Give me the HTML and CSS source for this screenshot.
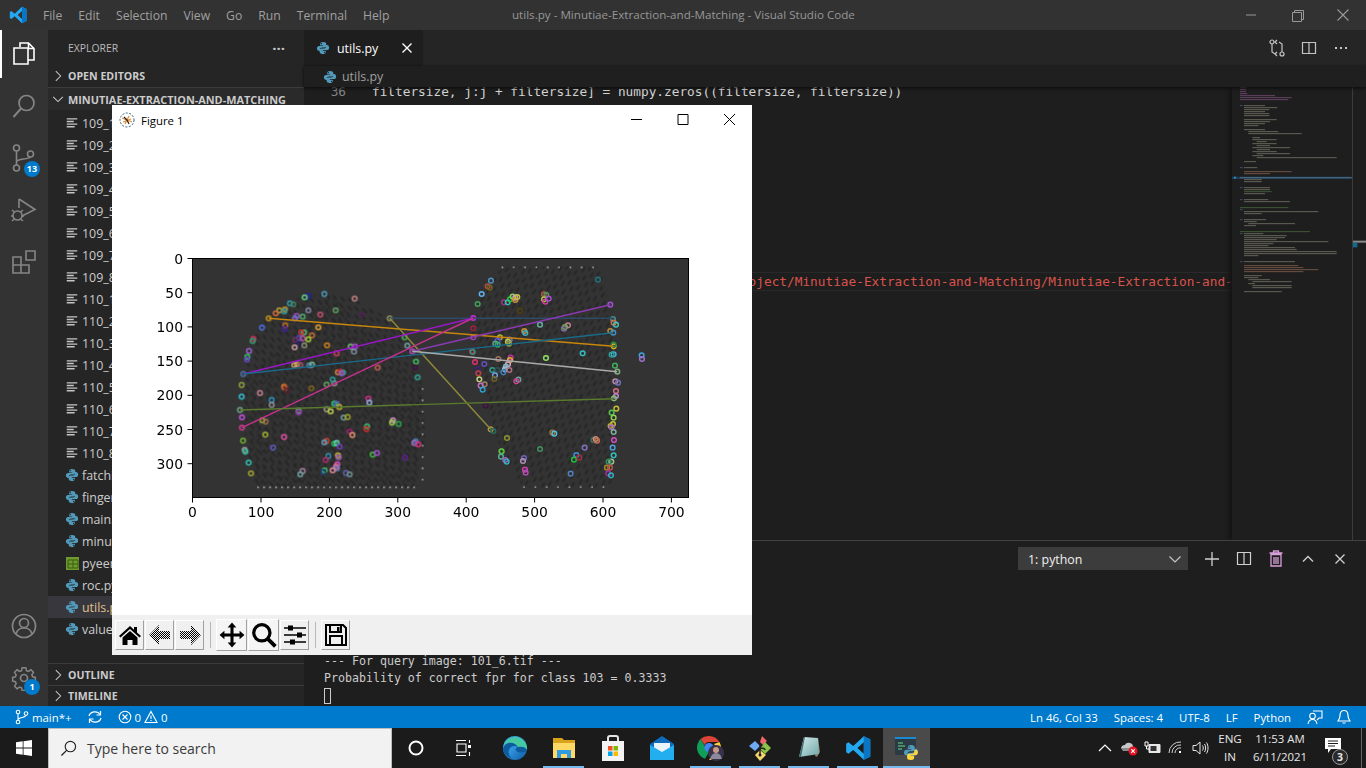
FILE: index.html
```html
<!DOCTYPE html>
<html lang="en">
<head>
<meta charset="utf-8">
<title>utils.py - Minutiae-Extraction-and-Matching - Visual Studio Code</title>
<link rel="stylesheet" href="styles.css">
</head>
<body>
<svg class="defs" width="0" height="0" aria-hidden="true">
  <defs>
    <symbol id="py" viewBox="0 0 16 16">
      <path fill="#519aba" d="M7.9 1C5.2 1 4.8 2.2 4.8 3.3V5h3.4v.7H3.4C2 5.7 1 6.8 1 8.4s.9 2.9 2.3 2.9h1.2V9.6c0-1.3 1.1-2.3 2.4-2.3h3c1.1 0 1.9-.9 1.9-2V3.3C11.800 2 10.600 1 7.900 1zM6.200 2.300a.7.7 0 1 1 0 1.400.7.7 0 0 1 0-1.400z"/>
      <path fill="#519aba" d="M8.100 15c2.700 0 3.100-1.200 3.100-2.300V11H7.800v-.7h4.800c1.400 0 2.400-1.100 2.400-2.700s-.9-2.900-2.300-2.900h-1.200v1.700c0 1.300-1.100 2.300-2.400 2.300h-3c-1.100 0-1.900.9-1.900 2v2c0 1.300 1.200 2.300 3.900 2.300zm1.700-1.300a.7.7 0 1 1 0-1.400.7.7 0 0 1 0 1.400z"/>
    </symbol>
    <symbol id="lines" viewBox="0 0 16 16">
      <path fill="#c5c5c5" d="M2 2.500h12v1.500H2zM2 5.500h8v1.500H2zM2 8.500h12v1.500H2zM2 11.500h9v1.500H2z"/>
    </symbol>
    <symbol id="chev-r" viewBox="0 0 16 16"><path fill="none" stroke="#c5c5c5" stroke-width="1.200" d="M5.500 2.500 11 8l-5.500 5.500"/></symbol>
    <symbol id="chev-d" viewBox="0 0 16 16"><path fill="none" stroke="#c5c5c5" stroke-width="1.200" d="M2.500 5.500 8 11l5.500-5.500"/></symbol>
    <pattern id="checker" width="2" height="2" patternUnits="userSpaceOnUse"><rect width="1" height="1" fill="#000"/><rect x="1" y="1" width="1" height="1" fill="#000"/></pattern>
    <pattern id="ridgeA" width="34" height="30" patternUnits="userSpaceOnUse" patternTransform="rotate(52)"><path d="M0 6h17M14 21h16" stroke="#232323" stroke-width="5"/></pattern>
    <pattern id="ridgeB" width="34" height="30" patternUnits="userSpaceOnUse" patternTransform="rotate(-58)"><path d="M0 6h17M14 21h16" stroke="#242424" stroke-width="5"/></pattern>
    <clipPath id="printL"><path d="M232 712 205 640 190 500 190 380 215 270 270 190 350 145 440 130 530 150 640 215 700 300 730 420 735 560 712 712z"/></clipPath>
    <clipPath id="printR"><path d="M250 712 185 610 125 410 95 250 125 130 165 70 200 50 470 50 495 90 525 260 530 500 515 712z"/></clipPath>
    <linearGradient id="edgeG" x1="0" y1="0" x2="1" y2="1"><stop offset="0" stop-color="#35c1f1"/><stop offset=".5" stop-color="#2f8fd8"/><stop offset="1" stop-color="#0c59a4"/></linearGradient>
    <linearGradient id="noteG" x1="0" y1="0" x2="1" y2="1"><stop offset="0" stop-color="#d6ecec"/><stop offset="1" stop-color="#6fa7a9"/></linearGradient>
  </defs>
</svg>

<header class="titlebar">
  <svg class="vscode-logo" width="18" height="18" viewBox="0 0 18 18"><path fill="#23a9f1" d="M13 .8 17.500 3v12L13 17.200 5.700 10.300 2.400 12.900.8 12V6l1.600-.9 3.300 2.600zM13 5 8.600 9l4.400 4z"/><path fill="#0a75c2" d="M13 .8 17.500 3v12L13 17.200V13 5z"/></svg>
  <nav class="menu"><span>File</span><span>Edit</span><span>Selection</span><span>View</span><span>Go</span><span>Run</span><span>Terminal</span><span>Help</span></nav>
  <div class="window-title">utils.py - Minutiae-Extraction-and-Matching - Visual Studio Code</div>
  <div class="win-controls">
    <svg width="46" height="30" viewBox="0 0 46 30"><path d="M18 15h10" stroke="#999" fill="none"/></svg>
    <svg width="46" height="30" viewBox="0 0 46 30"><path d="M18.500 12.500h9v9h-9zM20.500 12.500v-2h9v9h-2" stroke="#999" fill="none"/></svg>
    <svg width="46" height="30" viewBox="0 0 46 30"><path d="M17.500 9.500l11 11M28.500 9.500l-11 11" stroke="#999" stroke-width="1.100" fill="none"/></svg>
  </div>
</header>

<div class="workbench">
  <aside class="activity">
    <div class="act-item act-active">
      <svg width="26" height="26" viewBox="0 0 26 26"><path fill="none" stroke="#fff" stroke-width="1.600" d="M9 6V2h8.500L23 7.500V19h-6M17.500 2v5.500H23M3 7h14v16H3z"/></svg>
    </div>
    <div class="act-item"><svg width="26" height="26" viewBox="0 0 26 26"><circle cx="15.500" cy="10" r="7.500" fill="none" stroke="#858585" stroke-width="1.700"/><path d="M10 15.500 2.500 24" stroke="#858585" stroke-width="1.900"/></svg></div>
    <div class="act-item act-badged">
      <svg width="26" height="28" viewBox="0 0 26 28"><g fill="none" stroke="#858585" stroke-width="1.600"><circle cx="5.500" cy="4" r="3"/><circle cx="19.500" cy="10" r="3"/><circle cx="5.500" cy="24" r="3"/><path d="M5.500 7v14M5.500 18c1-4 11-2 14-5"/></g></svg>
      <span class="badge badge-scm">13</span>
    </div>
    <div class="act-item"><svg width="28" height="28" viewBox="0 0 28 28"><g fill="none" stroke="#858585" stroke-width="1.600"><path d="M9 3l16 10.500L12 20"/><path d="M9 3v9"/><circle cx="7.500" cy="19.500" r="4.500"/><path d="M2 14l3 2.500M13 14l-3 2.500M1 20h2M12 20h2M2 25l3-2.500M13 25l-3-2.500"/></g></svg></div>
    <div class="act-item"><svg width="26" height="26" viewBox="0 0 26 26"><g fill="none" stroke="#858585" stroke-width="1.600"><path d="M2 8h8v8H2zM2 16h8v8H2zM10 16h8v8h-8z"/><path d="M15 2h9v9h-9z"/></g></svg></div>
    <div class="act-bottom">
      <div class="act-item"><svg width="26" height="26" viewBox="0 0 26 26"><g fill="none" stroke="#858585" stroke-width="1.700"><circle cx="13" cy="13" r="11.500"/><circle cx="13" cy="10" r="4.500"/><path d="M5 21c1-4 4-6 8-6s7 2 8 6"/></g></svg></div>
      <div class="act-item act-badged">
        <svg width="26" height="26" viewBox="0 0 26 26"><g fill="none" stroke="#858585" stroke-width="1.700"><circle cx="13" cy="13" r="3.500"/><path d="M11 1.500h4l.7 3.300 2.200.9 2.800-1.800 2.800 2.800-1.800 2.800.9 2.200 3 .7v4l-3 .7-.9 2.200 1.800 2.800-2.800 2.800-2.800-1.800-2.200.9-.7 3h-4l-.7-3-2.200-.9-2.800 1.800-2.800-2.800 1.800-2.800-.9-2.200-3-.7v-4l3-.7.9-2.200L2.500 6.700l2.800-2.800 2.800 1.800 2.200-.9z" transform="translate(1.300 1.300) scale(.9)"/></g></svg>
        <span class="badge badge-gear">1</span>
      </div>
    </div>
  </aside>

  <aside class="sidebar">
    <div class="side-title"><span>EXPLORER</span><span class="dots">···</span></div>
    <div class="sec-row"><svg class="chev"><use href="#chev-r"/></svg>OPEN EDITORS</div>
    <div class="sec-row sec-root"><svg class="chev"><use href="#chev-d"/></svg>MINUTIAE-EXTRACTION-AND-MATCHING</div>
    <ul class="files">
      <li><svg class="ficon"><use href="#lines"/></svg>109_1.tif</li>
      <li><svg class="ficon"><use href="#lines"/></svg>109_2.tif</li>
      <li><svg class="ficon"><use href="#lines"/></svg>109_3.tif</li>
      <li><svg class="ficon"><use href="#lines"/></svg>109_4.tif</li>
      <li><svg class="ficon"><use href="#lines"/></svg>109_5.tif</li>
      <li><svg class="ficon"><use href="#lines"/></svg>109_6.tif</li>
      <li><svg class="ficon"><use href="#lines"/></svg>109_7.tif</li>
      <li><svg class="ficon"><use href="#lines"/></svg>109_8.tif</li>
      <li><svg class="ficon"><use href="#lines"/></svg>110_1.tif</li>
      <li><svg class="ficon"><use href="#lines"/></svg>110_2.tif</li>
      <li><svg class="ficon"><use href="#lines"/></svg>110_3.tif</li>
      <li><svg class="ficon"><use href="#lines"/></svg>110_4.tif</li>
      <li><svg class="ficon"><use href="#lines"/></svg>110_5.tif</li>
      <li><svg class="ficon"><use href="#lines"/></svg>110_6.tif</li>
      <li><svg class="ficon"><use href="#lines"/></svg>110_7.tif</li>
      <li><svg class="ficon"><use href="#lines"/></svg>110_8.tif</li>
      <li><svg class="ficon"><use href="#py"/></svg>fatching.py</li>
      <li><svg class="ficon"><use href="#py"/></svg>fingerprint.py</li>
      <li><svg class="ficon"><use href="#py"/></svg>main.py</li>
      <li><svg class="ficon"><use href="#py"/></svg>minutiae.py</li>
      <li><svg class="ficon"><rect x="1" y="1" width="14" height="14" fill="#6f9a2e"/><path d="M3 4h10v8H3zM8 4v8M3 8h10" stroke="#3d5c10" fill="none"/></svg>pyeer.csv</li>
      <li><svg class="ficon"><use href="#py"/></svg>roc.py</li>
      <li class="file-sel"><svg class="ficon"><use href="#py"/></svg>utils.py</li>
      <li><svg class="ficon"><use href="#py"/></svg>values.py</li>
    </ul>
    <div class="sec-row sec-foot"><svg class="chev"><use href="#chev-r"/></svg>OUTLINE</div>
    <div class="sec-row sec-foot"><svg class="chev"><use href="#chev-r"/></svg>TIMELINE</div>
  </aside>

  <main class="editor-area">
    <div class="tabs">
      <div class="tab"><svg class="ficon"><use href="#py"/></svg><span>utils.py</span>
        <svg class="tab-x" width="16" height="16" viewBox="0 0 16 16"><path d="M3.500 3.500l9 9M12.500 3.500l-9 9" stroke="#fff" stroke-width="1.400"/></svg></div>
      <div class="tab-actions">
        <svg width="16" height="18" viewBox="0 0 16 18"><g fill="none" stroke="#c5c5c5" stroke-width="1.200"><circle cx="3" cy="3" r="2"/><circle cx="13" cy="15" r="2"/><path d="M3 5v8l3 2M13 13V5L10 3M8 1 6 3l2 2M8 13l-2 2 2 2"/></g></svg>
        <svg width="16" height="16" viewBox="0 0 16 16"><path d="M1.500 2.500h13v11h-13zM8 2.500v11" fill="none" stroke="#c5c5c5" stroke-width="1.200"/></svg>
        <svg width="16" height="16" viewBox="0 0 16 16"><path d="M2 8h2M7 8h2M12 8h2" stroke="#c5c5c5" stroke-width="2"/></svg>
      </div>
    </div>
    <div class="breadcrumb"><svg class="ficon"><use href="#py"/></svg><span>utils.py</span></div>
    <div class="editor-body">
      <div class="code">
        <div class="line"><span class="ln">36</span><span class="src">filtersize, j:j + filtersize] = numpy.zeros((filtersize, filtersize))</span></div>
        <div class="line"></div><div class="line"></div><div class="line"></div>
        <div class="line"></div><div class="line"></div><div class="line"></div>
        <div class="line"></div><div class="line"></div><div class="line"></div>
        <div class="line line-cur"><span class="ln">46</span><span class="src str">db_path = "C:/Users/user/Documents/Fingerprint_Project/Minutiae-Extraction-and-Matching/Minutiae-Extraction-and-Matching/data</span></div>
      </div>
      <svg class="minimap" width="134" height="453" viewBox="36 171 402 1359">
        <rect x="36" y="440" width="360" height="7" fill="#264f78" opacity=".65"/>
        <g class="mm-lines" fill="none" stroke-width="2.600">
          <path stroke="#b070b0" d="M60 173h20M60 179h18M60 185h18M60 191h22M60 197h105M60 203h155M60 209h145"/>
          <path stroke="#4a8fc8" d="M60 227h8M60 413h8M60 473h8M60 509h8M60 539h8M60 569h8M60 611h8M60 695h8"/>
          <path stroke="#b0b09a" d="M72 227h63M72 233h100M72 239h76M72 245h63M72 251h76M72 257h76M72 269h98M72 275h78M72 281h63M72 287h43M72 299h63M85 305h90M85 311h160M97 323h23M97 329h73M110 335h30M97 341h73M110 347h40M97 353h113M110 359h40M97 365h73M110 371h100M97 377h33M110 383h240M72 395h36M72 413h40M72 449h53M72 455h53M72 473h78M72 479h78M72 491h63M72 509h73M72 515h138M72 545h223M72 551h53M72 569h66M72 575h38M85 581h140M72 587h36M72 611h58M72 617h128M72 623h123M72 629h98M72 635h253M72 641h88M72 647h73M72 653h153M72 659h158M72 665h278M72 671h278M72 677h43M72 695h153M72 737h53M72 743h43M85 749h65M97 755h118M85 761h20M97 767h118M97 773h118M72 785h113"/>
          <path stroke="#c89070" d="M72 425h143M72 431h78M72 707h163M72 713h178M72 719h223M72 725h178"/>
          <path stroke="#6a9955" d="M72 485h83M60 533h145M60 605h210"/>
          <path stroke="#7aa4b0" d="M60 443h335"/>
        </g>
        <rect x="42" y="440" width="6" height="6" fill="#1c8fc0"/>
        <path d="M397.500 171v1359" stroke="#3c3c3c" stroke-width="3"/>
        <rect x="399" y="632" width="39" height="6" fill="#8a8a8a"/>
        <rect x="399" y="638" width="13" height="14" fill="#146a8c"/>
      </svg>
    </div>
    <section class="panel">
      <div class="panel-head">
        <div class="term-select"><span>1: python</span><svg width="16" height="16"><use href="#chev-d"/></svg></div>
        <div class="panel-actions">
          <svg width="32" height="22" viewBox="0 0 32 22"><path d="M16 4v14M9 11h14" stroke="#d0d0d0" stroke-width="1.300"/></svg>
          <svg width="32" height="22" viewBox="0 0 32 22"><path d="M9.500 4.500h13v12h-13zM16 4.500v12" fill="none" stroke="#d0d0d0" stroke-width="1.200"/></svg>
          <svg width="32" height="22" viewBox="0 0 32 22"><path d="M11 6.500h10v11.500H11zM9.500 5h13M13.500 5V3h5v2M14 9v7M16 9v7M18 9v7" fill="none" stroke="#d8a0d8" stroke-width="1.300"/></svg>
          <svg width="32" height="22" viewBox="0 0 32 22"><path d="M11 13.500l5-5 5 5" fill="none" stroke="#d0d0d0" stroke-width="1.300"/></svg>
          <svg width="32" height="22" viewBox="0 0 32 22"><path d="M11.500 6.500l9 9M20.500 6.500l-9 9" fill="none" stroke="#d0d0d0" stroke-width="1.300"/></svg>
        </div>
      </div>
      <div class="terminal">
        <div class="term-line">--- For query image: 101_6.tif ---</div>
        <div class="term-line">Probability of correct fpr for class 103 = 0.3333</div>
        <div class="term-line"><span class="cursor"></span></div>
      </div>
    </section>
  </main>
</div>

<footer class="statusbar">
  <div class="st-left">
    <span class="st-item st-branch"><svg width="14" height="16" viewBox="0 0 14 16"><g fill="none" stroke="#fff" stroke-width="1.100"><circle cx="3" cy="3" r="1.800"/><circle cx="3" cy="13" r="1.800"/><circle cx="11" cy="4.500" r="1.800"/><path d="M3 4.800v6.400M3 11c0-3 8-2 8-4.700"/></g></svg>main*+</span>
    <span class="st-item st-sync"><svg width="16" height="16" viewBox="0 0 16 16"><g fill="none" stroke="#fff" stroke-width="1.200"><path d="M2 7a6 5.500 0 0 1 11-1.500M14 9a6 5.500 0 0 1-11 1.500"/><path d="M13.500 2v4h-4M2.500 14v-4h4"/></g></svg></span>
    <span class="st-item st-problems"><svg width="14" height="14" viewBox="0 0 14 14"><circle cx="7" cy="7" r="5.800" fill="none" stroke="#fff" stroke-width="1.100"/><path d="M4.500 4.500l5 5M9.500 4.500l-5 5" stroke="#fff" stroke-width="1.100"/></svg>0<svg width="14" height="14" viewBox="0 0 14 14"><path d="M7 1.500 13 12.500H1zM7 5.500v3.500M7 10v1" fill="none" stroke="#fff" stroke-width="1.100"/></svg>0</span>
  </div>
  <div class="st-right">
    <span>Ln 46, Col 33</span><span>Spaces: 4</span><span>UTF-8</span><span>LF</span><span>Python</span>
    <svg class="st-feedback" width="16" height="16" viewBox="0 0 16 16"><g fill="none" stroke="#fff" stroke-width="1.100"><circle cx="5.500" cy="7" r="2.800"/><path d="M1 15c.5-3 2-4.500 4.500-4.500S9.500 12 10 15M6 2h9v7h-3l-2 2"/></g></svg>
    <svg class="st-bell" width="16" height="16" viewBox="0 0 16 16"><path d="M8 1.500c-3 0-4 2-4 5 0 3-1.500 4.500-2 5.500h12c-.5-1-2-2.500-2-5.500 0-3-1-5-4-5zM6.500 14h3" fill="none" stroke="#fff" stroke-width="1.200"/></svg>
  </div>
</footer>

<footer class="taskbar">
  <div class="tb-start"><svg width="16" height="16" viewBox="0 0 16 16"><path fill="#fff" d="M0 2.200 6.700 1.300v6.200H0zM7.500 1.200 16 0v7.500H7.500zM0 8.400h6.700v6.300L0 13.800zM7.500 8.400H16V16l-8.500-1.200z"/></svg></div>
  <div class="tb-search">
    <svg width="17" height="17" viewBox="0 0 18 18"><circle cx="11" cy="7" r="5.500" fill="none" stroke="#222" stroke-width="1.200"/><path d="M7 11 1.500 16.500" stroke="#222" stroke-width="1.400"/></svg>
    <span>Type here to search</span>
  </div>
  <div class="tb-cell tb-wide"><svg width="16" height="16" viewBox="0 0 16 16"><circle cx="8" cy="8" r="6.500" fill="none" stroke="#fff" stroke-width="2"/></svg></div>
  <div class="tb-cell tb-wide"><svg width="18" height="16" viewBox="0 0 18 16"><path d="M1 .5h10M1 15.500h10M2 4h9v8H2zM14.500 0v3M14.500 12v4" fill="none" stroke="#fff" stroke-width="1.100"/><rect x="13" y="5" width="3" height="3" fill="#fff"/></svg></div>
  <div class="tb-cell"><svg width="26" height="26" viewBox="0 0 26 26"><circle cx="13" cy="13" r="12" fill="url(#edgeG)"/><path d="M1 14C2 8 8 4 14 5c6 1 10 5 11 10-2 3-6 3-9 2-3-1-3-4 0-5-3-2-8-1-9 3-1 3 0 7 4 9C6 23 1 19 1 14z" fill="#0e5a9e"/><path d="M16 12c4-1 8 0 9 3 1-6-4-13-12-13C8 2 3 6 2 11c3-4 10-5 14 1z" fill="#46c9a0"/></svg></div>
  <div class="tb-cell tb-run"><svg width="24" height="22" viewBox="0 0 24 22"><path fill="#d9a21b" d="M1 1h9l2 2h11v18H1z"/><path fill="#ffd964" d="M1 6h22v15H1z"/><path fill="#2f9be0" d="M5 13h14v8h-4v-4H9v4H5z"/></svg></div>
  <div class="tb-cell"><svg width="24" height="26" viewBox="0 0 24 26"><path d="M7 7V3a2 2 0 0 1 2-2h6a2 2 0 0 1 2 2v4" fill="none" stroke="#e5e5e5" stroke-width="2"/><path fill="#f3f3f3" d="M1 6h22v20H1z"/><rect x="7" y="11" width="4.500" height="4.500" fill="#f25022"/><rect x="12.500" y="11" width="4.500" height="4.500" fill="#7fba00"/><rect x="7" y="16.500" width="4.500" height="4.500" fill="#00a4ef"/><rect x="12.500" y="16.500" width="4.500" height="4.500" fill="#ffb900"/></svg></div>
  <div class="tb-cell"><svg width="26" height="24" viewBox="0 0 26 24"><path fill="#0f6cbd" d="M13 0 25 8v2L13 17 1 10V8z"/><path fill="#eaf4fb" d="M5 7h16v5l-8 5-8-5z"/><path fill="#23aef0" d="M1 9l12 7 12-7v15H1z"/></svg></div>
  <div class="tb-cell tb-run"><svg width="28" height="26" viewBox="0 0 28 26"><path fill="#db4437" d="M12 1a12 12 0 0 1 10.400 6H12a5 5 0 0 0-4.500 3L3.500 4A12 12 0 0 1 12 1z"/><path fill="#0f9d58" d="M3.500 4l5 8.500A5 5 0 0 0 12 17l-4 6.800A12 12 0 0 1 3.500 4z"/><path fill="#ffcd40" d="M22.400 7A12 12 0 0 1 12 25l5-8.500A5 5 0 0 0 17 9z"/><circle cx="12" cy="12.500" r="4.500" fill="#4285f4"/><circle cx="19" cy="18" r="8" fill="#39324a"/><circle cx="19" cy="15" r="3" fill="#c59b85"/><path d="M13 24c1-4 3-6 6-6s5 2 6 6z" fill="#8a8a9c"/></svg></div>
  <div class="tb-cell tb-run"><svg width="26" height="26" viewBox="0 0 26 26"><path fill="#f0646c" d="M15 1l5 5-4 4-3-3z"/><path fill="#6fa8f5" d="M8 6l5 5-5 5-6-5z"/><path fill="#8bc34a" d="M18 7l6 6-6 6-5-5z"/><path fill="#f5d76e" d="M13 15l6 5-6 6-5-6z"/><path d="M13 8v13M13 13c3 0 5 0 5 2" fill="none" stroke="#222" stroke-width="1.500"/><circle cx="13" cy="20" r="1.500" fill="#222"/></svg></div>
  <div class="tb-cell tb-run"><svg width="24" height="24" viewBox="0 0 24 24"><path fill="#8a7f60" d="M21 2l2 14-3 5-2-1z"/><path fill="url(#noteG)" d="M7 1l14 1 1 16-20 3z"/><path fill="#3f6f71" d="M2 21l5-20 1 0-4 20z"/></svg></div>
  <div class="tb-cell tb-run"><svg width="26" height="26" viewBox="0 0 18 18"><path fill="#23a9f1" d="M13 .8 17.500 3v12L13 17.200 5.700 10.300 2.400 12.900.8 12V6l1.600-.9 3.300 2.600zM13 5 8.600 9l4.400 4z"/><path fill="#0a75c2" d="M13 .8 17.500 3v12L13 17.200V13 5z"/></svg></div>
  <div class="tb-cell tb-run tb-active"><svg width="24" height="24" viewBox="0 0 24 24"><rect x="0" y="1" width="21" height="18" fill="#2b3a45"/><rect y="1" width="21" height="2" fill="#1b8ad0"/><path d="M3 7h5M3 10h7M3 13h4" stroke="#4fa86a" stroke-width="1.300"/><use href="#py" x="8" y="8" width="16" height="16"/><path fill="#ffd43b" d="M16 24c2.700 0 3.100-1.200 3.100-2.300V20h-3.400v-.7h4.800c1.400 0 2.400-1.100 2.400-2.700s-.9-2.900-2.300-2.900h-1.200v1.700c0 1.300-1.100 2.300-2.400 2.300h-3c-1.100 0-1.900.9-1.900 2v2c0 1.300 1.200 2.300 3.500 2.300z"/></svg></div>
  <div class="tray">
    <svg width="14" height="14" viewBox="0 0 14 14"><path d="M1 10l6-6 6 6" fill="none" stroke="#fff" stroke-width="1.200"/></svg>
    <svg width="18" height="16" viewBox="0 0 18 16"><path fill="#c8c8c8" d="M1 8a4 4 0 0 1 4-3c1-3 7-3 8 1l1 3H2z"/><path fill="#8a8a8a" d="M1 8h11v3H3z"/><circle cx="13" cy="11" r="4.500" fill="#e81123"/><path d="M11.200 9.200l3.600 3.600M14.800 9.200l-3.600 3.600" stroke="#fff" stroke-width="1.100"/></svg>
    <svg width="18" height="14" viewBox="0 0 18 14"><path d="M5 3.500h11v8H5z" fill="#e8e8e8" stroke="#e8e8e8"/><path d="M6.500 5h6v5h-6z" fill="#333"/><path d="M1 1h3v4H1zM2.500 5v3h3" fill="none" stroke="#fff"/></svg>
    <svg width="18" height="14" viewBox="0 0 18 14"><g fill="none" stroke="#cfcfcf"><path d="M1 12a11 11 0 0 1 12-11M4 12a8 8 0 0 1 9-8M7 12a5 5 0 0 1 6-5"/></g><rect x="11" y="10" width="2" height="2" fill="#fff"/></svg>
    <svg width="18" height="14" viewBox="0 0 18 14"><g fill="none" stroke="#e8e8e8"><path d="M1 4.500h3L8 1v12L4 9.500H1z"/><path d="M10.500 4.500c1 1.500 1 3.500 0 5M12.500 3c1.500 2 1.500 6 0 8M14.500 1.500c2 3 2 8 0 11"/></g></svg>
    <div class="tray-lang"><span>ENG</span><span>IN</span></div>
    <div class="tray-clock"><span>11:53 AM</span><span>6/11/2021</span></div>
    <div class="tray-note">
      <svg width="16" height="15" viewBox="0 0 16 15"><path fill="#fff" d="M0 0h16v11H6l-3 4v-4H0z"/><path d="M3 3h10M3 5.500h10M3 8h7" stroke="#1c1c1c"/></svg>
      <span class="note-badge">3</span>
    </div>
    <div class="show-desktop"></div>
  </div>
</footer>

<section class="figure-win">
  <div class="fig-title">
    <svg width="16" height="16" viewBox="0 0 16 16"><circle cx="8" cy="8" r="7" fill="#fff" stroke="#33617f" stroke-dasharray="2 1.500"/><path d="M3 6l10 4M6 12l4-8M4 10l8-3" stroke="#e08a2e" stroke-width="1.200"/><path d="M8 8l2 4M8 8 5 5" stroke="#222" stroke-width="1.200"/></svg>
    <span>Figure 1</span>
    <div class="fig-controls">
      <svg width="46" height="30" viewBox="0 0 46 30"><path d="M17 14.500h11" stroke="#000"/></svg>
      <svg width="46" height="30" viewBox="0 0 46 30"><path d="M18 9.500h10v10H18z" fill="none" stroke="#000"/></svg>
      <svg width="46" height="30" viewBox="0 0 46 30"><path d="M18 9l11 11M29 9 18 20" fill="none" stroke="#000"/></svg>
    </div>
  </div>
  <svg class="fig-canvas" width="640" height="480" viewBox="112 135 640 480">
    <rect x="192.500" y="258.500" width="496" height="239" fill="#333"/>
    <g class="prints">
      <g transform="translate(180 250) scale(.3333)">
        <g clip-path="url(#printL)"><rect x="180" y="120" width="560" height="600" fill="url(#ridgeA)"/><path d="M190 400 450 130 735 420 712 712H232z" fill="url(#ridgeB)" opacity=".6"/></g>
        <path d="M232 712H712" class="speck"/>
        <path d="M728 415V700" class="speck speck-sparse"/>
      </g>
      <g transform="translate(440 250) scale(.3333)">
        <g clip-path="url(#printR)"><rect x="90" y="45" width="450" height="670" fill="url(#ridgeB)"/></g>
        <path d="M185 52H470" class="speck speck-sparse"/>
        <path d="M250 711H500" class="speck speck-sparse"/>
      </g>
    </g>
    <g class="markers" transform="translate(180 250) scale(.3333)">
      <circle cx="433" cy="132" stroke="#4a9ab0"/><circle cx="385" cy="138" stroke="#2222aa"/><circle cx="374" cy="142" stroke="#60d080"/><circle cx="330" cy="160" stroke="#30a0b0"/><circle cx="340" cy="163" stroke="#408060"/><circle cx="524" cy="146" stroke="#c08080"/><circle cx="467" cy="181" stroke="#60a060"/><circle cx="315" cy="178" stroke="#c09030"/><circle cx="298" cy="181" stroke="#c0a030"/><circle cx="287" cy="190" stroke="#d07040"/><circle cx="313" cy="184" stroke="#30a0a0"/><circle cx="266" cy="205" stroke="#c09020"/><circle cx="385" cy="181" stroke="#8080a0"/><circle cx="421" cy="194" stroke="#c05070"/><circle cx="350" cy="198" stroke="#a050c0"/><circle cx="368" cy="200" stroke="#50b070"/><circle cx="345" cy="205" stroke="#7070d0"/><circle cx="629" cy="205" stroke="#909060"/><circle cx="246" cy="233" stroke="#5070e0"/><circle cx="220" cy="267" stroke="#d03060"/><circle cx="218" cy="273" stroke="#30a070"/><circle cx="316" cy="226" stroke="#c07020"/><circle cx="314" cy="237" stroke="#4020a0"/><circle cx="415" cy="232" stroke="#e0a030"/><circle cx="545" cy="194" stroke="#502050"/><circle cx="372" cy="247" stroke="#50c070"/><circle cx="364" cy="247" stroke="#d03030"/><circle cx="396" cy="256" stroke="#c07030"/><circle cx="358" cy="264" stroke="#4050c0"/><circle cx="368" cy="265" stroke="#c050a0"/><circle cx="385" cy="268" stroke="#a0d030"/><circle cx="346" cy="270" stroke="#703070"/><circle cx="356" cy="283" stroke="#202060"/><circle cx="373" cy="286" stroke="#909070"/><circle cx="344" cy="292" stroke="#d0a0a0"/><circle cx="441" cy="286" stroke="#d08020"/><circle cx="207" cy="303" stroke="#a060d0"/><circle cx="202" cy="321" stroke="#30c060"/><circle cx="201" cy="329" stroke="#7040d0"/><circle cx="470" cy="310" stroke="#d04060"/><circle cx="512" cy="290" stroke="#70c070"/><circle cx="525" cy="290" stroke="#b050d0"/><circle cx="522" cy="305" stroke="#8090a0"/><circle cx="674" cy="262" stroke="#40b050"/><circle cx="682" cy="287" stroke="#70a0a0"/><circle cx="697" cy="304" stroke="#b050c0"/><circle cx="708" cy="335" stroke="#40c060"/><circle cx="705" cy="352" stroke="#401040"/><circle cx="713" cy="382" stroke="#30a090"/><circle cx="593" cy="353" stroke="#c06050"/><circle cx="351" cy="343" stroke="#c0c030"/><circle cx="343" cy="345" stroke="#d0a080"/><circle cx="361" cy="345" stroke="#a05070"/><circle cx="388" cy="346" stroke="#6080c0"/><circle cx="396" cy="344" stroke="#70c090"/><circle cx="474" cy="367" stroke="#d09030"/><circle cx="481" cy="365" stroke="#d02030"/><circle cx="489" cy="368" stroke="#30a090"/><circle cx="484" cy="370" stroke="#a050c0"/><circle cx="190" cy="372" stroke="#5070a0"/><circle cx="185" cy="405" stroke="#90a040"/><circle cx="185" cy="440" stroke="#30c0d0"/><circle cx="240" cy="429" stroke="#c08090"/><circle cx="275" cy="450" stroke="#3090c0"/><circle cx="312" cy="410" stroke="#d08030"/><circle cx="314" cy="414" stroke="#c05030"/><circle cx="320" cy="422" stroke="#502030"/><circle cx="394" cy="415" stroke="#806020"/><circle cx="440" cy="404" stroke="#60a060"/><circle cx="463" cy="400" stroke="#909090"/><circle cx="458" cy="389" stroke="#30a0a0"/><circle cx="565" cy="446" stroke="#d03090"/><circle cx="568" cy="458" stroke="#90b0e0"/><circle cx="463" cy="461" stroke="#20d060"/><circle cx="470" cy="462" stroke="#6060d0"/><circle cx="478" cy="471" stroke="#c0b030"/><circle cx="275" cy="465" stroke="#909090"/><circle cx="180" cy="480" stroke="#70a080"/><circle cx="186" cy="502" stroke="#c050e0"/><circle cx="356" cy="482" stroke="#50c060"/><circle cx="356" cy="487" stroke="#a030c0"/><circle cx="440" cy="478" stroke="#a0a080"/><circle cx="452" cy="484" stroke="#c0d050"/><circle cx="247" cy="511" stroke="#a0b030"/><circle cx="257" cy="515" stroke="#a07050"/><circle cx="491" cy="503" stroke="#70a0a0"/><circle cx="503" cy="501" stroke="#a0a030"/><circle cx="561" cy="529" stroke="#30c070"/><circle cx="559" cy="537" stroke="#d03030"/><circle cx="639" cy="511" stroke="#d090c0"/><circle cx="636" cy="518" stroke="#a0d050"/><circle cx="656" cy="522" stroke="#30a050"/><circle cx="186" cy="533" stroke="#d04090"/><circle cx="256" cy="554" stroke="#a0b030"/><circle cx="312" cy="561" stroke="#e050a0"/><circle cx="509" cy="545" stroke="#a02070"/><circle cx="517" cy="555" stroke="#e09070"/><circle cx="189" cy="572" stroke="#70b030"/><circle cx="440" cy="573" stroke="#d04030"/><circle cx="433" cy="577" stroke="#60a0c0"/><circle cx="463" cy="581" stroke="#20c050"/><circle cx="470" cy="579" stroke="#70d0c0"/><circle cx="479" cy="590" stroke="#7040c0"/><circle cx="279" cy="593" stroke="#6060c0"/><circle cx="194" cy="600" stroke="#a0a0a0"/><circle cx="196" cy="605" stroke="#30c0a0"/><circle cx="707" cy="574" stroke="#4080c0"/><circle cx="703" cy="579" stroke="#a070c0"/><circle cx="715" cy="583" stroke="#e03080"/><circle cx="206" cy="638" stroke="#30c0b0"/><circle cx="445" cy="618" stroke="#3090b0"/><circle cx="474" cy="616" stroke="#c0b030"/><circle cx="476" cy="622" stroke="#a060c0"/><circle cx="437" cy="630" stroke="#b03070"/><circle cx="578" cy="614" stroke="#40c040"/><circle cx="591" cy="609" stroke="#a050d0"/><circle cx="675" cy="623" stroke="#602090"/><circle cx="472" cy="643" stroke="#e050c0"/><circle cx="468" cy="650" stroke="#e070a0"/><circle cx="471" cy="655" stroke="#7080c0"/><circle cx="458" cy="661" stroke="#e090a0"/><circle cx="434" cy="661" stroke="#40c060"/><circle cx="430" cy="666" stroke="#204080"/><circle cx="213" cy="670" stroke="#a0a030"/><circle cx="368" cy="663" stroke="#a080a0"/><circle cx="361" cy="673" stroke="#70a0a0"/><circle cx="498" cy="669" stroke="#6060b0"/><circle cx="509" cy="673" stroke="#709090"/>
    </g>
    <g class="markers" transform="translate(440 250) scale(.3333)">
      <circle cx="153" cy="92" stroke="#5090c0"/><circle cx="143" cy="109" stroke="#b05040"/><circle cx="149" cy="113" stroke="#706020"/><circle cx="125" cy="132" stroke="#60b0f0"/><circle cx="113" cy="162" stroke="#40a060"/><circle cx="192" cy="157" stroke="#a03090"/><circle cx="203" cy="157" stroke="#30c0b0"/><circle cx="210" cy="148" stroke="#30c040"/><circle cx="218" cy="140" stroke="#80d060"/><circle cx="226" cy="143" stroke="#d0a0d0"/><circle cx="226" cy="150" stroke="#d09030"/><circle cx="232" cy="141" stroke="#c0c040"/><circle cx="240" cy="182" stroke="#504010"/><circle cx="312" cy="133" stroke="#c05040"/><circle cx="319" cy="135" stroke="#40a060"/><circle cx="312" cy="148" stroke="#b0c040"/><circle cx="316" cy="155" stroke="#d040a0"/><circle cx="326" cy="146" stroke="#a050d0"/><circle cx="474" cy="89" stroke="#207080"/><circle cx="511" cy="164" stroke="#a050d0"/><circle cx="519" cy="207" stroke="#409090"/><circle cx="521" cy="218" stroke="#d07040"/><circle cx="528" cy="224" stroke="#40c0c0"/><circle cx="511" cy="243" stroke="#c09030"/><circle cx="520" cy="248" stroke="#4090c0"/><circle cx="100" cy="204" stroke="#c030e0"/><circle cx="100" cy="235" stroke="#a02040"/><circle cx="100" cy="262" stroke="#a040b0"/><circle cx="300" cy="224" stroke="#60b0a0"/><circle cx="384" cy="226" stroke="#c08090"/><circle cx="375" cy="231" stroke="#70b040"/><circle cx="372" cy="236" stroke="#8070a0"/><circle cx="253" cy="243" stroke="#d09030"/><circle cx="256" cy="249" stroke="#40b0c0"/><circle cx="180" cy="262" stroke="#b0b030"/><circle cx="173" cy="272" stroke="#5050e0"/><circle cx="166" cy="281" stroke="#60a090"/><circle cx="173" cy="284" stroke="#30b060"/><circle cx="209" cy="269" stroke="#7070e0"/><circle cx="204" cy="275" stroke="#c0d040"/><circle cx="207" cy="281" stroke="#90a040"/><circle cx="521" cy="289" stroke="#e0b030"/><circle cx="521" cy="284" stroke="#209040"/><circle cx="96" cy="303" stroke="#c03040"/><circle cx="98" cy="306" stroke="#409080"/><circle cx="428" cy="310" stroke="#30c0c0"/><circle cx="521" cy="313" stroke="#40b0e0"/><circle cx="515" cy="314" stroke="#30a090"/><circle cx="318" cy="324" stroke="#90e060"/><circle cx="175" cy="327" stroke="#a07060"/><circle cx="212" cy="323" stroke="#c030a0"/><circle cx="210" cy="330" stroke="#e0b030"/><circle cx="105" cy="336" stroke="#e03070"/><circle cx="133" cy="342" stroke="#6050c0"/><circle cx="204" cy="343" stroke="#e0a0c0"/><circle cx="198" cy="350" stroke="#70c0c0"/><circle cx="114" cy="359" stroke="#402080"/><circle cx="157" cy="360" stroke="#30a090"/><circle cx="172" cy="360" stroke="#305050"/><circle cx="195" cy="358" stroke="#a0c0e0"/><circle cx="208" cy="360" stroke="#b07080"/><circle cx="190" cy="367" stroke="#4080c0"/><circle cx="115" cy="370" stroke="#c04040"/><circle cx="165" cy="376" stroke="#70a0e0"/><circle cx="163" cy="387" stroke="#706020"/><circle cx="118" cy="388" stroke="#c0d080"/><circle cx="235" cy="389" stroke="#70a0a0"/><circle cx="229" cy="394" stroke="#d04090"/><circle cx="525" cy="347" stroke="#40b060"/><circle cx="532" cy="365" stroke="#80b080"/><circle cx="526" cy="394" stroke="#c090a0"/><circle cx="534" cy="398" stroke="#7070c0"/><circle cx="134" cy="403" stroke="#a08060"/><circle cx="122" cy="407" stroke="#c070c0"/><circle cx="128" cy="419" stroke="#30a0d0"/><circle cx="528" cy="423" stroke="#d07080"/><circle cx="528" cy="438" stroke="#c080d0"/><circle cx="522" cy="445" stroke="#80c070"/><circle cx="137" cy="467" stroke="#401040"/><circle cx="529" cy="476" stroke="#c0c030"/><circle cx="515" cy="488" stroke="#50c050"/><circle cx="521" cy="503" stroke="#90d050"/><circle cx="519" cy="522" stroke="#c0c030"/><circle cx="512" cy="528" stroke="#c0b020"/><circle cx="515" cy="532" stroke="#a060d0"/><circle cx="521" cy="546" stroke="#80b0a0"/><circle cx="152" cy="538" stroke="#b09040"/><circle cx="160" cy="543" stroke="#207060"/><circle cx="337" cy="548" stroke="#a07030"/><circle cx="343" cy="551" stroke="#50c0e0"/><circle cx="201" cy="564" stroke="#909030"/><circle cx="460" cy="570" stroke="#407060"/><circle cx="467" cy="567" stroke="#c09080"/><circle cx="471" cy="572" stroke="#d07050"/><circle cx="522" cy="570" stroke="#d050c0"/><circle cx="300" cy="597" stroke="#409060"/><circle cx="434" cy="593" stroke="#8070c0"/><circle cx="518" cy="593" stroke="#50a0e0"/><circle cx="184" cy="604" stroke="#c05030"/><circle cx="185" cy="604" stroke="#40d040"/><circle cx="183" cy="620" stroke="#50b090"/><circle cx="196" cy="630" stroke="#a060c0"/><circle cx="200" cy="635" stroke="#30b0c0"/><circle cx="252" cy="624" stroke="#7060c0"/><circle cx="249" cy="633" stroke="#b090b0"/><circle cx="409" cy="615" stroke="#4090e0"/><circle cx="402" cy="629" stroke="#20c040"/><circle cx="418" cy="623" stroke="#a03040"/><circle cx="521" cy="616" stroke="#30c0c0"/><circle cx="514" cy="635" stroke="#a0c090"/><circle cx="506" cy="635" stroke="#309060"/><circle cx="501" cy="653" stroke="#a09020"/><circle cx="510" cy="653" stroke="#c05050"/><circle cx="255" cy="659" stroke="#d040b0"/><circle cx="257" cy="668" stroke="#b050b0"/><circle cx="392" cy="671" stroke="#5080c0"/><circle cx="505" cy="670" stroke="#a030a0"/><circle cx="513" cy="676" stroke="#30b0c0"/><circle cx="605" cy="316" stroke="#40a0e0"/><circle cx="606" cy="327" stroke="#a070d0"/>
    </g>
    <g class="matches">
      <path d="M389.700 318.300 613 318.300" stroke="#2e4a66"/>
      <path d="M268.700 318.300 613.700 346.300" stroke="#c8860d"/>
      <path d="M389.700 318.300 490.700 429.300" stroke="#8f8a3a"/>
      <path d="M243.300 374 473.300 318" stroke="#9a17c8"/>
      <path d="M243.300 374 613.300 332.700" stroke="#1a6a8a"/>
      <path d="M242 427.700 473.300 318" stroke="#c83090"/>
      <path d="M240 410 614 398.700" stroke="#5a7a2e"/>
      <path d="M412.300 351.300 610.300 304.700" stroke="#8a3ab0"/>
      <path d="M412.300 351.300 617.300 371.700" stroke="#aaaaaa"/>
    </g>
    <rect class="frame" x="192.500" y="258.500" width="496" height="239"/>
    <path class="ticks" d="M192.500 497.500v5M261 497.500v5M329.400 497.500v5M397.800 497.500v5M466.200 497.500v5M534.600 497.500v5M603 497.500v5M671.400 497.500v5M192.500 258.500h-5M192.500 292.700h-5M192.500 326.900h-5M192.500 361.100h-5M192.500 395.300h-5M192.500 429.500h-5M192.500 463.700h-5"/>
    <g class="xlabels">
      <text x="192.500" y="517">0</text><text x="261" y="517">100</text><text x="329.400" y="517">200</text><text x="397.800" y="517">300</text><text x="466.200" y="517">400</text><text x="534.600" y="517">500</text><text x="603" y="517">600</text><text x="671.400" y="517">700</text>
    </g>
    <g class="ylabels">
      <text x="183" y="263.500">0</text><text x="183" y="297.700">50</text><text x="183" y="331.900">100</text><text x="183" y="366.100">150</text><text x="183" y="400.300">200</text><text x="183" y="434.500">250</text><text x="183" y="468.700">300</text>
    </g>
  </svg>
  <div class="fig-toolbar">
    <button class="tool" aria-label="Home"><svg width="24" height="24" viewBox="0 0 24 24"><path d="M12 3 1 13l1.500 1.500L12 6l9.500 8.500L23 13l-4-3.600V4h-3v2.700z"/><path d="M4.500 14.500 12 8l7.500 6.500V22h-5v-5h-5v5h-5z"/></svg></button>
    <button class="tool" aria-label="Back"><svg width="24" height="24" viewBox="0 0 24 24"><path fill="url(#checker)" d="M11 2 1 12l10 10v-6h11V8H11z"/></svg></button>
    <button class="tool" aria-label="Forward"><svg width="24" height="24" viewBox="0 0 24 24"><path fill="url(#checker)" d="M13 2l10 10-10 10v-6H2V8h11z"/></svg></button>
    <span class="tool-sep"></span>
    <button class="tool tool-on" aria-label="Pan"><svg width="26" height="26" viewBox="0 0 24 24"><path d="M12 .5l4 4.500h-2.600v5.600H19V8l4.500 4-4.500 4v-2.600h-5.600V19H16l-4 4.500L8 19h2.600v-5.600H5V16L.5 12 5 8v2.600h5.600V5H8z"/></svg></button>
    <button class="tool tool-on" aria-label="Zoom"><svg width="26" height="26" viewBox="0 0 24 24"><circle cx="10" cy="10" r="7.500" fill="none" stroke="#000" stroke-width="3"/><path d="M15.500 15.500 22.500 22.500" stroke="#000" stroke-width="3.500"/></svg></button>
    <button class="tool" aria-label="Configure"><svg width="24" height="24" viewBox="0 0 24 24"><path d="M1 5h22M1 12h22M1 19h22" stroke="#000" stroke-width="1.500"/><rect x="5" y="2.500" width="5" height="5"/><rect x="14" y="9.500" width="5" height="5"/><rect x="7" y="16.500" width="5" height="5"/></svg></button>
    <span class="tool-sep"></span>
    <button class="tool" aria-label="Save"><svg width="24" height="24" viewBox="0 0 24 24"><path d="M2 2h17l3 3v17H2z" fill="none" stroke="#000" stroke-width="2"/><path d="M6 3v6h11V3" fill="none" stroke="#000" stroke-width="2"/><rect x="13" y="4" width="2.500" height="4"/><path d="M6 21v-8h12v8" fill="none" stroke="#000" stroke-width="2"/></svg></button>
  </div>
</section>
</body>
</html>
```

FILE: styles.css
```css
* { box-sizing: border-box; }
html, body { margin: 0; padding: 0; }
body {
  width: 1366px;
  height: 768px;
  overflow: hidden;
  position: relative;
  display: flex;
  flex-direction: column;
  background: #1e1e1e;
  color: #ccc;
  font-family: "Open Sans", "Noto Sans", sans-serif;
  font-size: 12px;
}
.defs { position: absolute; }

/* title bar */
.titlebar {
  height: 30px;
  flex: none;
  display: flex;
  align-items: center;
  background: #323232;
  position: relative;
}
.vscode-logo { margin-left: 9px; flex: none; }
.menu { display: flex; gap: 16px; margin-left: 16px; font-size: 12.2px; color: #a0a0a0; }
.window-title {
  position: absolute;
  left: 512px;
  top: 0;
  line-height: 30px;
  font-size: 11.62px;
  color: #979797;
  white-space: nowrap;
}
.win-controls { margin-left: auto; display: flex; }
.win-controls svg { display: block; }

/* workbench */
.workbench { height: 676px; flex: none; display: flex; }
.activity {
  width: 48px;
  flex: none;
  background: #333;
  display: flex;
  flex-direction: column;
  gap: 4px;
}
.act-item {
  height: 48px;
  display: flex;
  align-items: center;
  justify-content: center;
  position: relative;
}
.act-active { border-left: 2px solid #fff; padding-right: 2px; }
.act-bottom { margin-top: auto; display: flex; flex-direction: column; gap: 4px; padding-bottom: 4px; }
.badge {
  position: absolute;
  background: #007acc;
  color: #fff;
  border-radius: 50%;
  font-size: 9px;
  font-weight: 700;
  width: 16px;
  height: 16px;
  line-height: 16px;
  text-align: center;
}
.badge-scm { left: 24px; top: 27px; }
.badge-gear { left: 24px; top: 25px; }

/* sidebar */
.sidebar {
  width: 256px;
  flex: none;
  background: #252526;
  display: flex;
  flex-direction: column;
  overflow: hidden;
}
.side-title {
  height: 35px;
  flex: none;
  display: flex;
  align-items: center;
  justify-content: space-between;
  padding: 0 19px 0 20px;
  font-size: 10.4px;
  color: #bbb;
}
.dots { font-size: 15px; font-weight: 700; color: #c5c5c5; letter-spacing: 0; }
.sec-row {
  height: 22px;
  flex: none;
  display: flex;
  align-items: center;
  font-size: 10.6px;
  font-weight: 700;
  color: #ccc;
  white-space: nowrap;
}
.chev { width: 14px; height: 14px; margin: 0 3px 0 3px; flex: none; }
.sec-root { border-top: 1px solid #3c3c3c; height: 23px; background: #2a2a2b; font-size: 10.9px; }
.sec-foot { border-top: 1px solid #3c3c3c; }
.sec-foot:last-child { height: 21px; }
.files { list-style: none; margin: 2px 0 0; padding: 0; flex: 1; }
.files li {
  height: 22px;
  display: flex;
  align-items: center;
  padding-left: 17px;
  font-size: 12.4px;
  color: #ccc;
  white-space: nowrap;
}
.ficon { width: 14px; height: 14px; margin-right: 3px; flex: none; }
.file-sel { background: #37373d; color: #e2c08d !important; }

/* editor */
.editor-area { flex: 1; min-width: 0; display: flex; flex-direction: column; }
.tabs {
  height: 36px;
  flex: none;
  display: flex;
  align-items: stretch;
  background: #252526;
}
.tab {
  width: 119px;
  background: #1e1e1e;
  display: flex;
  align-items: center;
  padding-left: 12px;
  font-size: 12.4px;
  color: #fff;
}
.tab .ficon { margin-right: 7px; }
.tab-x { margin-left: auto; margin-right: 8px; }
.tab-actions {
  margin-left: auto;
  display: flex;
  align-items: center;
  gap: 16px;
  padding-right: 17px;
}
.breadcrumb {
  height: 21px;
  flex: none;
  display: flex;
  align-items: center;
  padding-left: 19px;
  font-size: 12.4px;
  color: #a0a0a0;
  background: #1f1f1f;
  box-shadow: 0 1px 3px #0a0a0a;
  position: relative;
  z-index: 1;
}
.breadcrumb .ficon { margin-right: 5px; }
.editor-body { height: 453px; flex: none; display: flex; background: #1e1e1e; }
.code {
  flex: 1;
  min-width: 0;
  overflow: hidden;
  font-family: "DejaVu Sans Mono", "Liberation Mono", monospace;
  font-size: 12.78px;
  color: #d4d4d4;
}
.line { height: 19px; line-height: 19px; display: flex; white-space: pre; }
.line:first-child { margin-top: -5px; }
.ln { width: 42px; flex: none; text-align: right; color: #858585; margin-right: 26px; }
.src { flex: none; }
.str { color: #d9534c; }
.line-cur { box-shadow: inset 0 0 0 1px #282828; }
.minimap { flex: none; display: block; box-shadow: -3px 0 4px #141414; }
.mm-lines { opacity: .55; }

/* panel */
.panel {
  flex: 1;
  min-height: 0;
  border-top: 1px solid #414141;
  background: #1e1e1e;
  display: flex;
  flex-direction: column;
  overflow: hidden;
}
.panel-head { display: flex; justify-content: flex-end; align-items: center; padding: 6px 10px 0 0; }
.term-select {
  width: 170px;
  height: 23px;
  background: #3c3c3c;
  color: #f0f0f0;
  font-size: 12.4px;
  display: flex;
  align-items: center;
  justify-content: space-between;
  padding: 1px 5px 0 10px;
  margin-right: 8px;
}
.panel-actions { display: flex; }
.panel-actions svg { display: block; }
.terminal {
  margin-top: auto;
  padding: 0 0 1px 20px;
  font-family: "DejaVu Sans Mono", "Liberation Mono", monospace;
  font-size: 11.62px;
  line-height: 17.5px;
  color: #cccccc;
}
.term-line { height: 17.5px; white-space: pre; }
.cursor { display: inline-block; width: 7px; height: 16px; border: 1px solid #ccc; vertical-align: middle; }

/* status bar */
.statusbar {
  height: 22px;
  flex: none;
  background: #007acc;
  color: #fff;
  display: flex;
  justify-content: space-between;
  align-items: center;
  font-size: 11.4px;
}
.st-left { display: flex; align-items: center; padding-left: 15px; }
.st-item { display: flex; align-items: center; gap: 3px; }
.st-sync { margin-left: 15px; }
.st-problems { margin-left: 15px; }
.st-right { display: flex; align-items: center; gap: 16px; padding-right: 14px; }
.st-bell { margin-left: -3px; }

/* taskbar */
.taskbar {
  height: 40px;
  flex: none;
  background: #1b1b1b;
  display: flex;
  align-items: stretch;
  color: #fff;
}
.tb-start { width: 48px; display: flex; align-items: center; justify-content: center; }
.tb-search {
  width: 344px;
  background: #f2f2f2;
  border: 1px solid #bdbdbd;
  border-bottom: 0;
  display: flex;
  align-items: center;
  gap: 10px;
  padding-left: 11px;
  color: #3a3a3a;
  font-size: 14px;
}
.tb-cell {
  width: 49px;
  flex: none;
  display: flex;
  align-items: center;
  justify-content: center;
  position: relative;
}
.tb-wide { width: 48px; }
.tb-wide + .tb-cell:not(.tb-wide) { margin-left: 2px; }
.tb-run::after {
  content: "";
  position: absolute;
  left: 4px;
  right: 4px;
  bottom: 0;
  height: 2px;
  background: #76b9ed;
}
.tb-active { background: #4a4a4a; width: 47px; margin-left: 1px; }
.tb-active::after { left: 0; right: 0; }
.tray { margin-left: auto; display: flex; align-items: center; font-size: 11.4px; color: #e8e8e8; }
.tray > svg { margin-right: 6px; flex: none; }
.tray > svg:first-child { margin-right: 8px; }
.tray-lang, .tray-clock { display: flex; flex-direction: column; align-items: center; line-height: 18px; }
.tray-lang { width: 28px; font-size: 11.6px; }
.tray-clock { width: 66px; margin-left: 3px; }
.tray-note { width: 28px; height: 40px; margin-left: 6px; position: relative; display: flex; align-items: center; justify-content: center; padding-bottom: 6px; }
.note-badge {
  position: absolute;
  left: 13px;
  top: 21px;
  width: 16px;
  height: 16px;
  line-height: 14px;
  text-align: center;
  font-size: 10.5px;
  font-weight: 700;
  border-radius: 50%;
  border: 1px solid #999;
  background: #2a2a2a;
}
.show-desktop { width: 5px; height: 40px; margin-left: 14px; border-left: 1px solid #666; }

/* matplotlib window */
.figure-win {
  position: absolute;
  left: 112px;
  top: 105px;
  width: 640px;
  height: 550px;
  background: #fff;
  display: flex;
  flex-direction: column;
  color: #000;
}
.fig-title {
  height: 30px;
  flex: none;
  display: flex;
  align-items: center;
  padding-left: 7px;
  font-size: 11.4px;
  gap: 6px;
}
.fig-controls { margin-left: auto; display: flex; }
.fig-controls svg { display: block; }
.fig-canvas { display: block; flex: none; }
.prints { filter: blur(.4px); }
.speck { fill: none; stroke: #e0e0e0; stroke-width: 4; stroke-dasharray: 4 14; }
.speck-sparse { stroke-dasharray: 4 30; }
.markers { fill: none; stroke-width: 4.4; filter: blur(.25px); }
.markers circle { r: 7px; }
.matches { fill: none; stroke-width: 1.4; }
.frame { fill: none; stroke: #000; stroke-width: 1; }
.ticks { fill: none; stroke: #000; stroke-width: 1; }
.xlabels text, .ylabels text { font-family: "DejaVu Sans", sans-serif; font-size: 13.9px; fill: #000; }
.xlabels text { text-anchor: middle; }
.ylabels text { text-anchor: end; }
.fig-toolbar {
  height: 40px;
  flex: none;
  background: #f0f0f0;
  display: flex;
  align-items: center;
  padding-left: 3px;
  gap: 1px;
}
.tool {
  width: 29px;
  height: 30px;
  padding: 0;
  background: #f0f0f0;
  border: 1px solid;
  border-color: #fff #a0a0a0 #a0a0a0 #fff;
  display: flex;
  align-items: center;
  justify-content: center;
}
.tool-on { width: 31px; height: 32px; background: #f5f5f5; }
.tool-sep { width: 1px; height: 26px; background: #b8b8b8; margin: 0 4px 0 5px; }
```
